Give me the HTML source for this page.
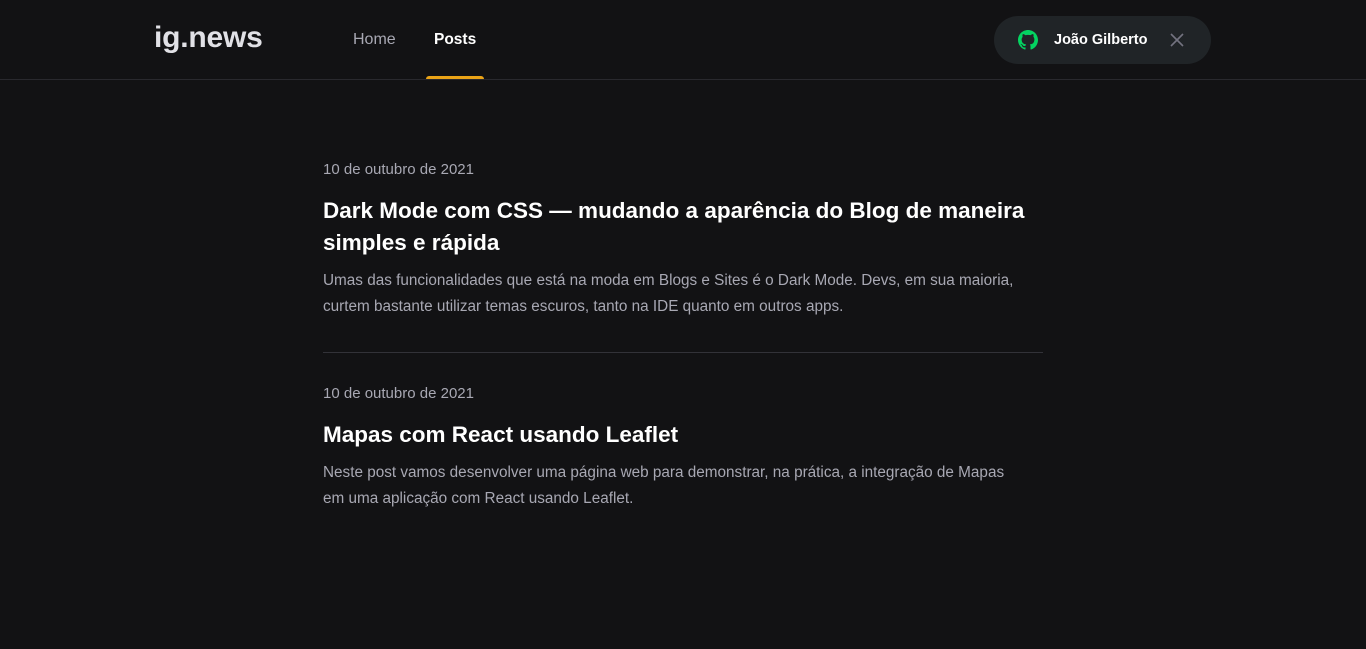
<!DOCTYPE html>
<html><head><meta charset="utf-8"><style>
*{margin:0;padding:0;box-sizing:border-box}
body{background:#121214;font-family:"Liberation Sans",sans-serif;width:1366px;height:649px;overflow:hidden;color:#e1e1e6}
header{height:80px;border-bottom:1px solid #29292e;position:relative}
.logo{position:absolute;left:154px;top:21px;font-size:30px;font-weight:bold;color:#e1e1e6;letter-spacing:-0.2px}
.nav a{position:absolute;top:31px;font-size:16px;color:#a8a8b3;text-decoration:none}
.nav .act{color:#fff;font-weight:bold;font-size:15.5px}
.bar{position:absolute;left:426px;top:76px;width:58px;height:3px;background:#eba417;border-radius:3px 3px 0 0}
.btn{position:absolute;left:994px;top:16px;width:217px;height:48px;border-radius:24px;background:#202427;}
.btn svg{position:absolute;left:24px;top:14px}
.btn .n{position:absolute;left:60px;top:16px;font-size:14.5px;font-weight:bold;color:#fff}
.btn .x{position:absolute;left:176px;top:17px}
main{position:absolute;left:323px;width:720px;top:161px}
.d{font-size:15px;color:#a8a8b3}
h2{font-size:22.5px;color:#fff;line-height:32px;margin-top:17px}
p{font-size:15.3px;color:#a8a8b3;line-height:26px;margin-top:9px;width:716px}
hr{border:0;border-top:1px solid #323238;margin:32px 0 32px}
</style></head><body>
<header>
<div class="logo">ig.news</div>
<div class="nav"><a style="left:353px">Home</a><a class="act" style="left:434px">Posts</a></div>
<div class="bar"></div>
<div class="btn">
<svg width="20" height="20" viewBox="0 0 16 16"><path fill="#04d361" d="M8 0C3.58 0 0 3.58 0 8c0 3.54 2.290 6.53 5.47 7.59.4.07.55-.17.55-.38v-1.33c-2.23.48-2.7-1.07-2.7-1.07-.36-.92-.89-1.170-.89-1.170-.73-.5.05-.49.05-.49.8.06 1.23.83 1.23.83.71 1.22 1.87.87 2.33.66.07-.52.28-.87.51-1.07-1.78-.2-3.64-.89-3.64-3.95 0-.87.31-1.59.82-2.15-.08-.2-.36-1.020.08-2.12 0 0 .67-.21 2.2.82A7.7 7.7 0 0 1 8 3.87c.68 0 1.36.09 2 .27 1.53-1.04 2.2-.82 2.2-.82.44 1.1.16 1.92.08 2.12.51.56.82 1.27.82 2.15 0 3.07-1.87 3.75-3.65 3.95.29.25.54.73.54 1.48v2.2c0 .21.15.46.55.38A8 8 0 0 0 16 8c0-4.42-3.58-8-8-8z"/></svg>
<span class="n">João Gilberto</span>
<svg class="x" width="14" height="14" viewBox="0 0 14 14"><path d="M1 1L13 13M13 1L1 13" stroke="#737380" stroke-width="1.6"/></svg>
</div>
</header>
<main>
<div class="d">10 de outubro de 2021</div>
<h2>Dark Mode com CSS — mudando a aparência do Blog de maneira simples e rápida</h2>
<p>Umas das funcionalidades que está na moda em Blogs e Sites é o Dark Mode. Devs, em sua maioria, curtem bastante utilizar temas escuros, tanto na IDE quanto em outros apps.</p>
<hr>
<div class="d">10 de outubro de 2021</div>
<h2>Mapas com React usando Leaflet</h2>
<p>Neste post vamos desenvolver uma página web para demonstrar, na prática, a integração de Mapas<br>em uma aplicação com React usando Leaflet.</p>
</main>
</body></html>
